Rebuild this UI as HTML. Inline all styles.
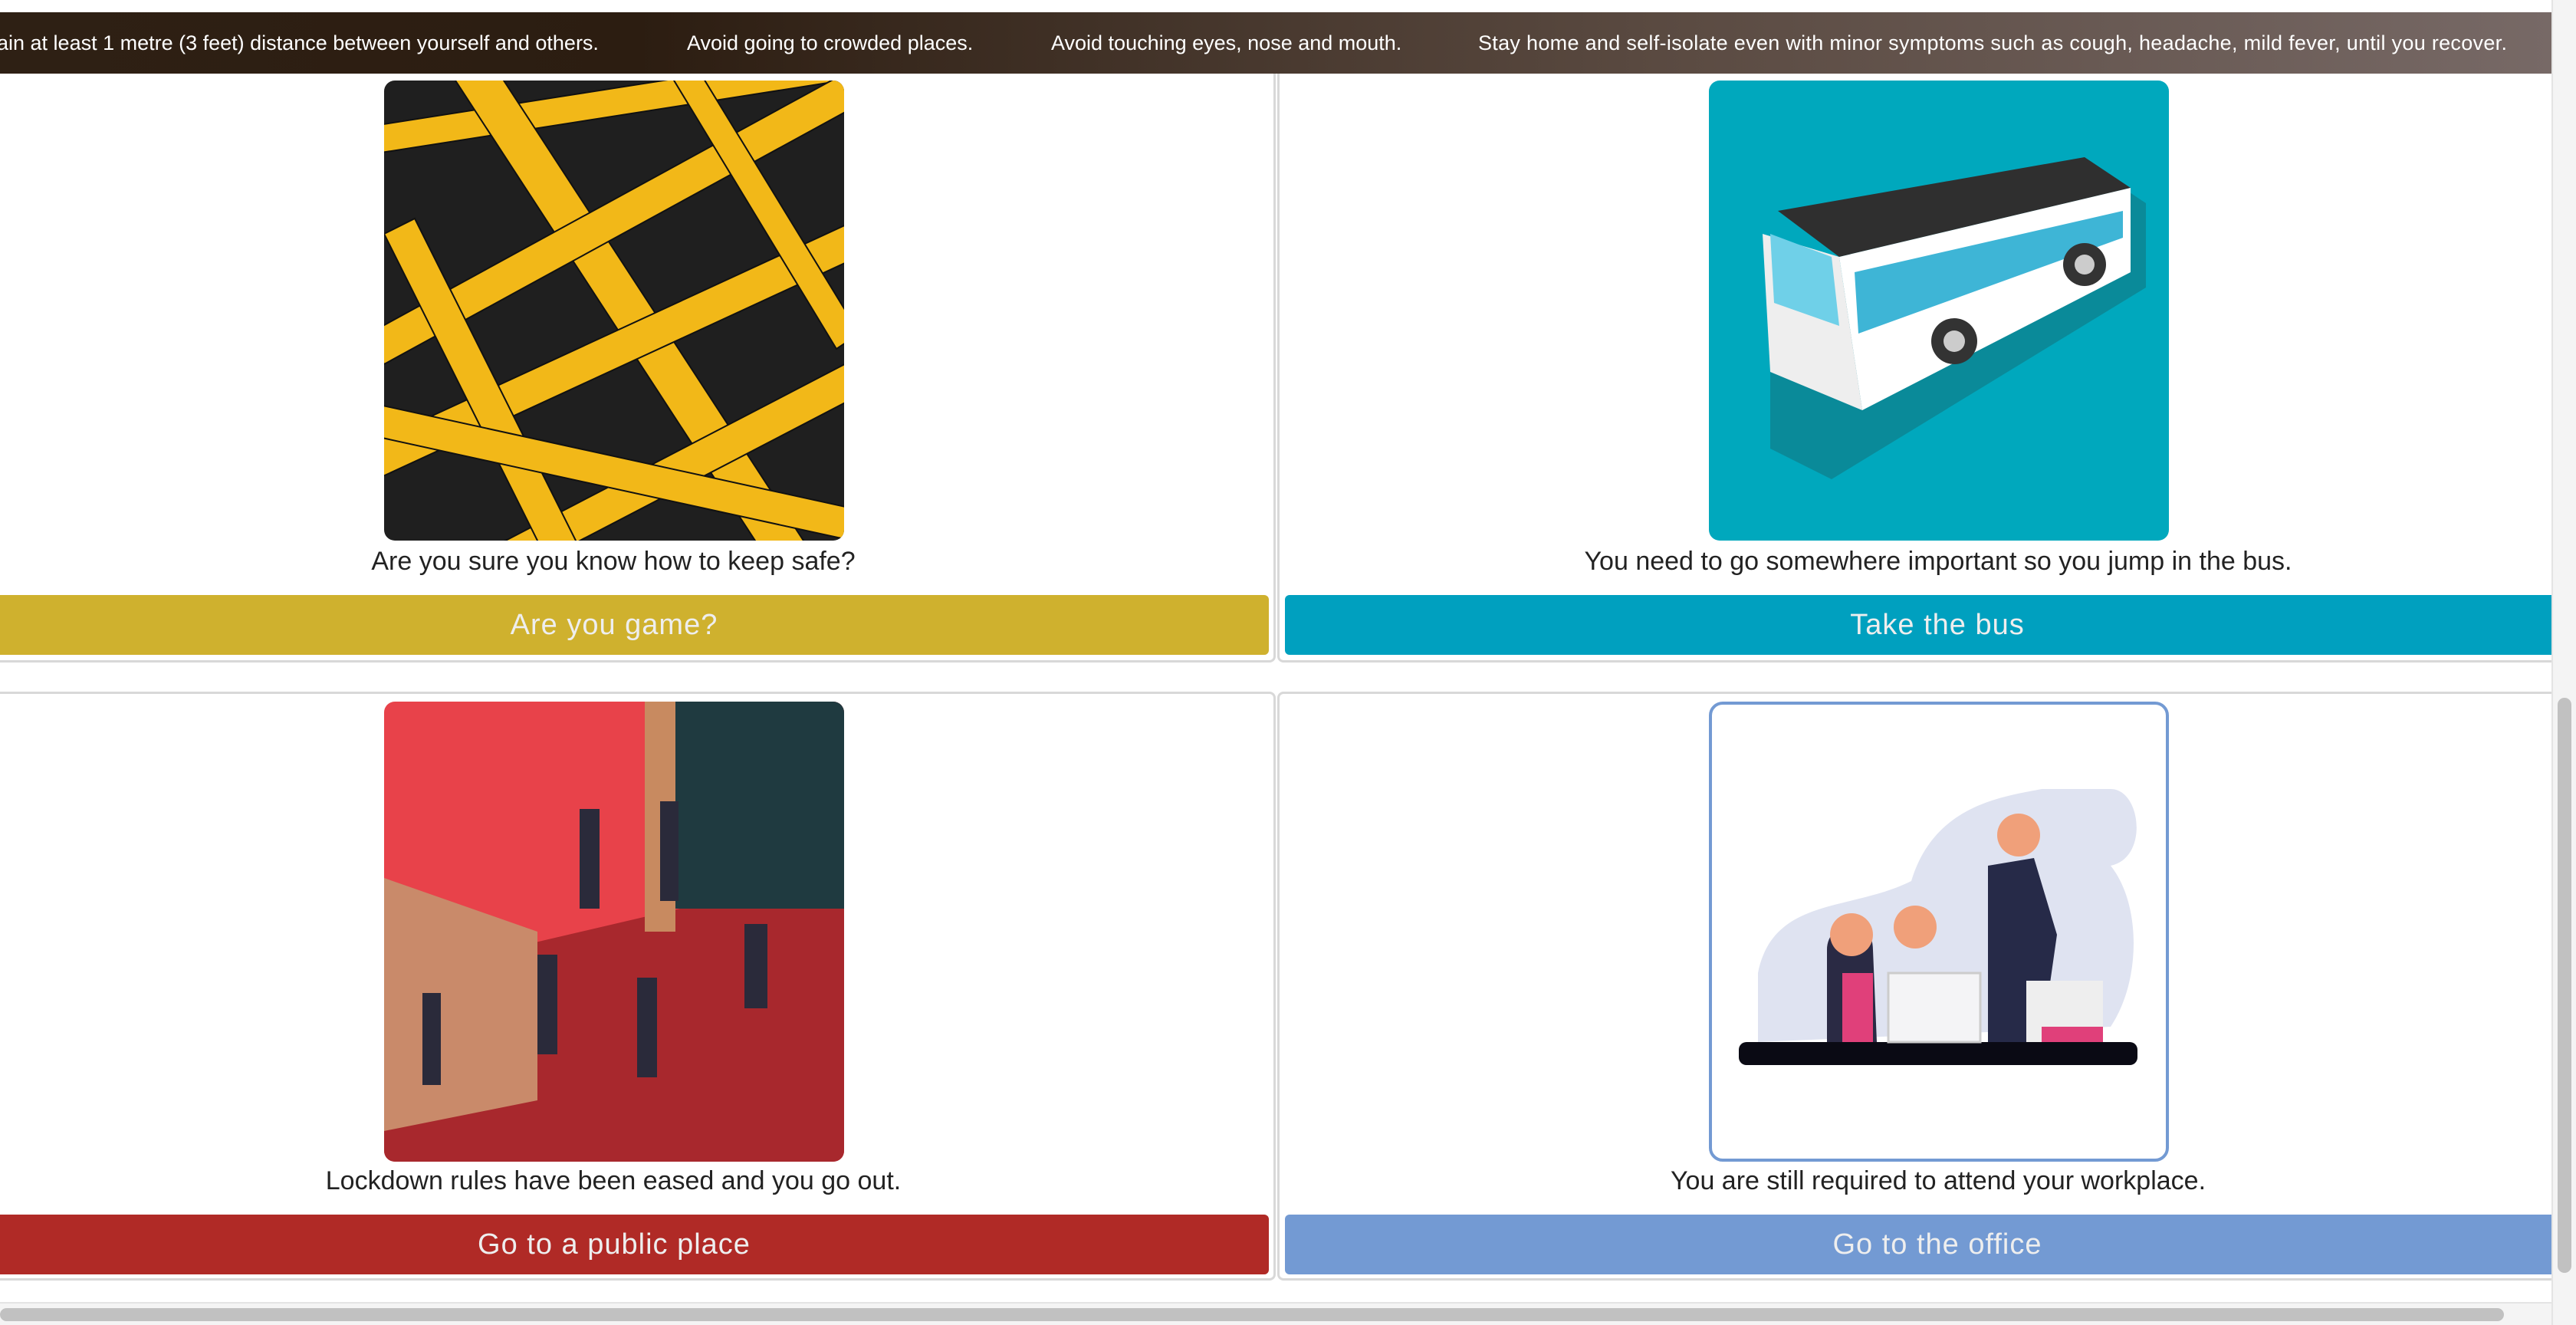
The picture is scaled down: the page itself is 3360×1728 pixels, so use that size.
<!DOCTYPE html>
<html><head><meta charset="utf-8"><style>
*{margin:0;padding:0;box-sizing:border-box}
html,body{width:3360px;height:1728px;overflow:hidden;background:#fff;font-family:"Liberation Sans",sans-serif}
.banner{position:absolute;left:0;top:16px;width:3328px;height:80px;background:linear-gradient(90deg,#2e2014 0%,#2c1d11 25%,#5a4a41 65%,#776966 100%);color:#fff;font-size:27px;white-space:nowrap;line-height:80px}
.banner span{position:absolute;top:0}
.vs{position:absolute;left:3328px;top:0;width:32px;height:1728px;background:#f4f4f4;border-left:2px solid #e4e4e4}
.vs i{position:absolute;left:6px;top:910px;width:18px;height:750px;background:#c1c1c1;border-radius:9px}
.hs{position:absolute;left:0;top:1698px;width:3328px;height:30px;background:#f4f4f4;border-top:2px solid #e4e4e4}
.hs i{position:absolute;left:0;top:6px;width:3266px;height:17px;background:#c1c1c1;border-radius:9px}
.card{position:absolute;border:3px solid #d8d8d8;border-top:none;border-radius:0 0 8px 8px;background:#fff}
.card.t{border-top:3px solid #d8d8d8;border-radius:8px}
.img{position:absolute;width:600px;height:600px;border-radius:14px;overflow:hidden}
.cap{position:absolute;width:1660px;text-align:center;font-size:34px;color:#222}
.btn{position:absolute;height:78px;border-radius:6px;color:#eee;font-size:38px;text-align:center;line-height:78px;letter-spacing:1px}
</style></head><body>
<div class="banner">
<span style="left:-4px">ain at least 1 metre (3 feet) distance between yourself and others.</span>
<span style="left:896px">Avoid going to crowded places.</span>
<span style="left:1371px">Avoid touching eyes, nose and mouth.</span>
<span style="left:1928px;letter-spacing:0.3px">Stay home and self-isolate even with minor symptoms such as cough, headache, mild fever, until you recover.</span>
</div>
<div class="card" style="left:-10px;top:96px;width:1674px;height:768px"></div>
<div class="card" style="left:1666px;top:96px;width:1680px;height:768px"></div>
<div class="card t" style="left:-10px;top:902px;width:1674px;height:768px"></div>
<div class="card t" style="left:1666px;top:902px;width:1680px;height:768px"></div>

<div class="img" style="left:501px;top:105px;background:#1f1f1f">
<svg width="600" height="600" viewBox="0 0 600 600">
<g fill="#f2b818" stroke="#111" stroke-width="2">
<polygon points="-20,60 620,-40 630,-5 -10,95"/>
<polygon points="80,-20 130,-40 560,620 510,640"/>
<polygon points="-20,330 620,-20 640,20 0,370"/>
<polygon points="-30,480 620,180 640,220 -10,520"/>
<polygon points="120,620 620,360 640,400 140,660"/>
<polygon points="360,-30 400,-30 620,330 590,350"/>
<polygon points="0,200 40,180 260,620 220,640"/>
<polygon points="-20,420 620,560 610,600 -30,460"/>
</g></svg></div>
<div class="img" style="left:2229px;top:105px;background:#00a8bd">
<svg width="600" height="600" viewBox="0 0 600 600">
<polygon points="70,290 500,100 560,140 560,250 150,500 70,460" fill="#0a8a99" transform="translate(10,20)"/>
<polygon points="90,170 490,100 550,140 170,230" fill="#2f2f2f"/>
<polygon points="170,230 550,140 550,250 200,430" fill="#fff"/>
<polygon points="70,200 170,230 200,430 80,380" fill="#eee"/>
<polygon points="190,250 540,170 540,205 195,330" fill="#3eb5d6"/>
<polygon points="80,200 160,230 170,320 85,290" fill="#6fd0e8"/>
<circle cx="320" cy="340" r="30" fill="#333"/><circle cx="320" cy="340" r="14" fill="#ccc"/>
<circle cx="490" cy="240" r="28" fill="#333"/><circle cx="490" cy="240" r="13" fill="#ccc"/>
</svg></div>
<div class="img" style="left:501px;top:915px;background:#e8424a">
<svg width="600" height="600" viewBox="0 0 600 600">
<polygon points="0,360 600,220 600,600 0,600" fill="#a8282d"/>
<rect x="340" y="0" width="260" height="270" fill="#1f3a40"/>
<rect x="340" y="0" width="40" height="300" fill="#c88a60"/>
<polygon points="0,230 200,300 200,520 0,560" fill="#c98a6a"/>
<g fill="#2a2a3a"><rect x="255" y="140" width="26" height="130"/><rect x="360" y="130" width="24" height="130"/><rect x="200" y="330" width="26" height="130"/><rect x="330" y="360" width="26" height="130"/><rect x="470" y="290" width="30" height="110"/><rect x="50" y="380" width="24" height="120"/></g>
</svg></div>
<div class="img" style="left:2229px;top:915px;background:#fff;border:4px solid #739ad3;border-radius:18px">
<svg width="592" height="592" viewBox="0 0 592 592">
<path d="M60,350 C80,250 180,270 260,230 C290,130 380,120 430,110 L520,110 C560,110 570,200 520,210 C560,260 560,360 520,420 L60,440 Z" fill="#dfe3f1"/>
<rect x="35" y="440" width="520" height="30" rx="10" fill="#0a0a14"/>
<rect x="230" y="350" width="120" height="90" fill="#f4f4f6" stroke="#ccc" stroke-width="3"/>
<path d="M150,320 C150,280 210,270 210,320 L215,440 L150,440 Z" fill="#2a2a44"/>
<rect x="170" y="350" width="40" height="90" fill="#e0407a"/>
<circle cx="182" cy="300" r="28" fill="#f0a07a"/><circle cx="265" cy="290" r="28" fill="#f0a07a"/>
<path d="M360,210 L420,200 L450,300 L430,440 L360,440 Z" fill="#262a48"/>
<circle cx="400" cy="170" r="28" fill="#f0a07a"/>
<rect x="410" y="360" width="100" height="80" fill="#eee"/>
<rect x="430" y="420" width="80" height="20" fill="#e0407a"/>
</svg></div>

<div class="cap" style="left:-30px;top:713px">Are you sure you know how to keep safe?</div>
<div class="cap" style="left:1698px;top:713px">You need to go somewhere important so you jump in the bus.</div>
<div class="cap" style="left:-30px;top:1521px">Lockdown rules have been eased and you go out.</div>
<div class="cap" style="left:1698px;top:1521px">You are still required to attend your workplace.</div>

<div class="btn" style="left:-53px;top:776px;width:1708px;background:#cfb12e">Are you game?</div>
<div class="btn" style="left:1676px;top:776px;width:1702px;background:#00a0bf">Take the bus</div>
<div class="btn" style="left:-53px;top:1584px;width:1708px;background:#b02a26">Go to a public place</div>
<div class="btn" style="left:1676px;top:1584px;width:1702px;background:#739ad3">Go to the office</div>

<div class="vs"><i></i></div>
<div class="hs"><i></i></div>
</body></html>
